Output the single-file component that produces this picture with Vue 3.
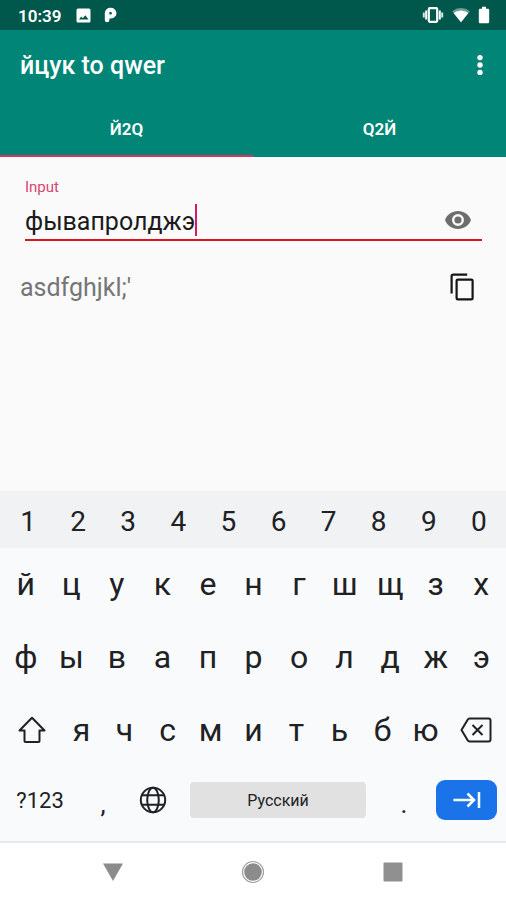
<script setup>
import { ref, computed } from 'vue'

const cyrillic = "йцукенгшщзхъфывапролджэячсмитьбю"
const latin = "qwertyuiop[]asdfghjkl;'zxcvbnm,."

const tabs = ['Й2Q', 'Q2Й']
const activeTab = ref(0)
const text = ref('фывапролджэ')
const convert = (value, from, to) =>
  [...value].map((c) => (from.includes(c) ? to[from.indexOf(c)] : c)).join('')
const output = computed(() =>
  activeTab.value === 0
    ? convert(text.value, cyrillic, latin)
    : convert(text.value, latin, cyrillic)
)

const digits = [...'1234567890']
const letterRows = [[...'йцукенгшщзх'], [...'фывапролджэ']]
const bottomLetters = [...'ячсмитьбю']

const type = (c) => { text.value += c }
const erase = () => { text.value = text.value.slice(0, -1) }
</script>

<template>
  <div class="screen">
    <div class="status">
      <span class="clock">10:39</span>
      <svg class="photo" viewBox="0 0 15 15" width="15" height="15" aria-hidden="true">
        <path fill="#fff" fill-rule="evenodd" d="M2 .5h11a1.500 1.500 0 0 1 1.500 1.500v11a1.500 1.500 0 0 1-1.500 1.500H2A1.500 1.500 0 0 1 .5 13V2A1.500 1.500 0 0 1 2 .5zM3 11.500h9.500L9.300 7.200l-2.500 3.100L5.200 8.500z" />
      </svg>
      <svg class="parking" viewBox="0 0 13 16" width="13" height="16" aria-hidden="true">
        <path fill="#fff" fill-rule="evenodd" d="M6.500 .7a5.700 5.400 0 0 1 .5 10.900H5.400V13A2.300 2.300 0 0 1 .8 13V6A5.500 5.500 0 0 1 6.500 .7zM5.400 4.900v2.700H6.600a1.350 1.350 0 0 0 0-2.700z" />
      </svg>
      <span class="spacer"></span>
      <svg viewBox="0 0 22 18" width="22" height="18" aria-hidden="true">
        <rect x="6.800" y="2.200" width="8.400" height="13.600" rx="1" fill="none" stroke="#fff" stroke-width="2.200" />
        <path d="M4.200 4.500v9M17.800 4.500v9" stroke="#fff" stroke-width="2" />
        <path d="M1.800 6.500v5M20.200 6.500v5" stroke="#d5e5e2" stroke-width="2" />
      </svg>
      <svg class="wifi" viewBox="0 0 18 16" width="18" height="16" aria-hidden="true">
        <path fill="#6f9f98" d="M9 15.200L.2 4.200a14 14 0 0 1 17.600 0z" />
        <path fill="#fff" d="M9 15.200L1.600 6a12 12 0 0 1 14.800 0z" />
      </svg>
      <svg class="battery" viewBox="0 0 12 18" width="12" height="18" aria-hidden="true">
        <path fill="#fff" d="M4 .8h4v2h2a1.200 1.200 0 0 1 1.200 1.200v12a1.200 1.200 0 0 1-1.200 1.200H2A1.200 1.200 0 0 1 .8 16V4A1.200 1.200 0 0 1 2 2.800h2z" />
      </svg>
    </div>

    <header class="appbar">
      <div class="toolbar">
        <h1>йцук to qwer</h1>
        <button class="more" aria-label="More options">
          <svg viewBox="0 0 6 22" width="6" height="22">
            <g fill="#fff"><circle cx="3" cy="3.600" r="2.700" /><circle cx="3" cy="11" r="2.700" /><circle cx="3" cy="18.400" r="2.700" /></g>
          </svg>
        </button>
      </div>
      <nav class="tabs" role="tablist">
        <button
          v-for="(tab, i) in tabs"
          :key="tab"
          role="tab"
          :aria-selected="activeTab === i"
          :class="{ active: activeTab === i }"
          @click="activeTab = i"
        >{{ tab }}</button>
      </nav>
    </header>

    <main>
      <div class="field">
        <label for="source">Input</label>
        <div class="line">
          <input id="source" v-model="text" type="text" autocomplete="off" spellcheck="false">
          <span class="caret"></span>
          <button class="eye" aria-label="Toggle visibility">
            <svg viewBox="0 0 26 18" width="26" height="18">
              <path fill="#6d6d6d" fill-rule="evenodd" d="M13 0C7 0 2 3.700 0 9c2 5.300 7 9 13 9s11-3.700 13-9C24 3.700 19 0 13 0zm0 15a6 6 0 1 1 0-12 6 6 0 0 1 0 12zm0-2.400a3.600 3.600 0 1 0 0-7.200 3.600 3.600 0 0 0 0 7.200z" />
            </svg>
          </button>
        </div>
      </div>
      <div class="result">
        <output for="source">{{ output }}</output>
        <button aria-label="Copy">
          <svg viewBox="0 0 24 28" width="24" height="28">
            <path fill="none" stroke="#151515" stroke-width="2.200" d="M1.600 20.500V3.100a1.500 1.500 0 0 1 1.500-1.500H17.200" />
            <rect x="6.600" y="6.600" width="16" height="19.800" rx="1.200" fill="none" stroke="#151515" stroke-width="2.200" />
          </svg>
        </button>
      </div>
    </main>

    <section class="keyboard" aria-label="Keyboard">
      <div class="row digits">
        <button v-for="d in digits" :key="d" @click="type(d)">{{ d }}</button>
      </div>
      <div v-for="(row, i) in letterRows" :key="i" class="row letters">
        <button v-for="c in row" :key="c" @click="type(c)">{{ c }}</button>
      </div>
      <div class="row letters last">
        <button class="side" aria-label="Shift">
          <svg viewBox="0 0 28 28" width="28" height="28">
            <path fill="none" stroke="#202124" stroke-width="2" stroke-linejoin="round" d="M14 1.800L1.500 14.500H6.500V25a1 1 0 0 0 1 1H20.500a1 1 0 0 0 1-1V14.500H26.500z" />
          </svg>
        </button>
        <button v-for="c in bottomLetters" :key="c" @click="type(c)">{{ c }}</button>
        <button class="side" aria-label="Backspace" @click="erase">
          <svg viewBox="0 0 32 26" width="32" height="26">
            <path fill="none" stroke="#202124" stroke-width="2" stroke-linejoin="round" d="M9.500 1.500H28.500a2 2 0 0 1 2 2v19a2 2 0 0 1-2 2H9.500a2 2 0 0 1-1.700-1L1.500 13 7.800 2.500a2 2 0 0 1 1.700-1z" />
            <path stroke="#202124" stroke-width="2" d="M12.500 8l10 10M22.500 8l-10 10" />
          </svg>
        </button>
      </div>
      <div class="row actions">
        <button class="symbols">?123</button>
        <button class="punct" @click="type(',')">,</button>
        <button class="globe" aria-label="Change language">
          <svg viewBox="0 0 28 28" width="28" height="28">
            <g fill="none" stroke="#202124" stroke-width="2">
              <circle cx="14" cy="14" r="12.200" />
              <ellipse cx="14" cy="14" rx="5.800" ry="12.200" />
              <path d="M3 9.300h22M3 18.700h22" />
            </g>
          </svg>
        </button>
        <button class="space" @click="type(' ')">Русский</button>
        <button class="punct dot" @click="type('.')">.</button>
        <button class="next" aria-label="Next">
          <svg viewBox="0 0 28 18" width="28" height="18">
            <path fill="none" stroke="#fff" stroke-width="2.500" d="M.5 9H20M14.500 2.500L21 9l-6.500 6.500M26 1v16" />
          </svg>
        </button>
      </div>
    </section>

    <nav class="system">
      <button aria-label="Back">
        <svg viewBox="0 0 22 20" width="22" height="20"><path fill="#8c8c8c" d="M1 1.500h20L11 19z" /></svg>
      </button>
      <button aria-label="Home">
        <svg viewBox="0 0 24 24" width="24" height="24">
          <circle cx="12" cy="12" r="10.500" fill="none" stroke="#a2a2a2" stroke-width="1.200" />
          <circle cx="12" cy="12" r="8.800" fill="#8c8c8c" />
        </svg>
      </button>
      <button aria-label="Recent apps">
        <svg viewBox="0 0 20 20" width="20" height="20"><rect x=".5" y=".5" width="19" height="19" rx="1" fill="#909090" /></svg>
      </button>
    </nav>
  </div>
</template>

<style>
body {
  margin: 0;
}
</style>

<style scoped>
.screen {
  display: flex;
  flex-direction: column;
  min-height: 100vh;
  background: #fafafa;
  color: #202124;
  font-family: Roboto, "Liberation Sans", sans-serif;
}
.screen * {
  box-sizing: border-box;
}
button {
  display: flex;
  align-items: center;
  justify-content: center;
  margin: 0;
  padding: 0;
  border: 0;
  background: none;
  color: inherit;
  font: inherit;
}
svg {
  display: block;
  flex: none;
}
.status {
  display: flex;
  align-items: center;
  height: 30px;
  padding: 0 16px 0 18px;
  background: #00574b;
  color: #fff;
}
.clock {
  padding-top: 2px;
  font-size: 17px;
  font-weight: 600;
  line-height: 28px;
}
.photo {
  margin-left: 15px;
}
.parking {
  margin-left: 13px;
}
.spacer {
  flex: 1;
}
.wifi {
  margin-left: 8px;
}
.battery {
  margin-left: 8px;
}
.appbar {
  background: #008577;
  color: #fff;
}
.toolbar {
  display: flex;
  align-items: center;
  justify-content: space-between;
  height: 70px;
  padding: 0 12px 0 20px;
}
h1 {
  margin: 0;
  padding-top: 2px;
  font-size: 25px;
  font-weight: 500;
  line-height: 32px;
}
.more {
  width: 28px;
  height: 40px;
}
.tabs {
  display: flex;
}
.tabs button {
  flex: 1;
  height: 57px;
  padding-top: 2px;
  border-bottom: 2px solid transparent;
  font-size: 17px;
  font-weight: 600;
}
.tabs .active {
  border-color: #d8365f;
}
main {
  flex: 1;
}
.field {
  margin: 0 24px 0 25px;
  padding-top: 21px;
  border-bottom: 2px solid #dc1420;
}
label {
  display: block;
  color: #d8446f;
  font-size: 15px;
  line-height: 18px;
}
.line {
  display: flex;
  align-items: center;
  height: 43px;
  padding-top: 5px;
}
input {
  field-sizing: content;
  min-width: 0;
  height: 32px;
  padding: 2px 0 0;
  border: 0;
  outline: 0;
  background: none;
  color: #1b1b1b;
  caret-color: transparent;
  font: inherit;
  font-size: 25px;
}
.caret {
  width: 2px;
  height: 32px;
  background: #d81b60;
}
.eye {
  width: 48px;
  height: 38px;
  margin-left: auto;
}
.result {
  display: flex;
  align-items: center;
  justify-content: space-between;
  padding: 22px 24px 20px 20px;
  color: #757575;
  font-size: 25px;
  line-height: 32px;
}
.result output {
  padding-top: 2px;
}
.result button {
  width: 40px;
  height: 48px;
}
.keyboard {
  background: #f8fafb;
  border-bottom: 2px solid #e6e8ea;
}
.row {
  display: flex;
  height: 73px;
  padding: 0 2px 2px 3px;
}
.row button {
  flex: 1;
}
.row.digits {
  height: 57px;
  padding-top: 6px;
  background: #f1f2f4;
  font-size: 28px;
}
.letters {
  font-size: 32px;
}
.row .side {
  flex: 0 0 57px;
}
.row.actions {
  align-items: center;
  height: 74px;
  padding: 0 9px 8px;
  font-size: 22px;
}
.actions .symbols {
  flex: 0 0 62px;
}
.actions .punct {
  flex: 0 0 64px;
  height: 40px;
  padding-top: 8px;
  font-size: 26px;
}
.actions .globe {
  flex: 0 0 36px;
}
.actions .space {
  height: 36px;
  margin-left: 19px;
  border-radius: 4px;
  background: #e1e1e1;
  font-size: 16px;
}
.actions .dot {
  flex-basis: 70px;
  padding-left: 6px;
}
.actions .next {
  flex: 0 0 61px;
  height: 40px;
  border-radius: 9px;
  background: #1a73e8;
}
.system {
  display: flex;
  align-items: center;
  justify-content: center;
  height: 57px;
  background: #fff;
}
.system button {
  width: 140px;
  height: 48px;
}
</style>
